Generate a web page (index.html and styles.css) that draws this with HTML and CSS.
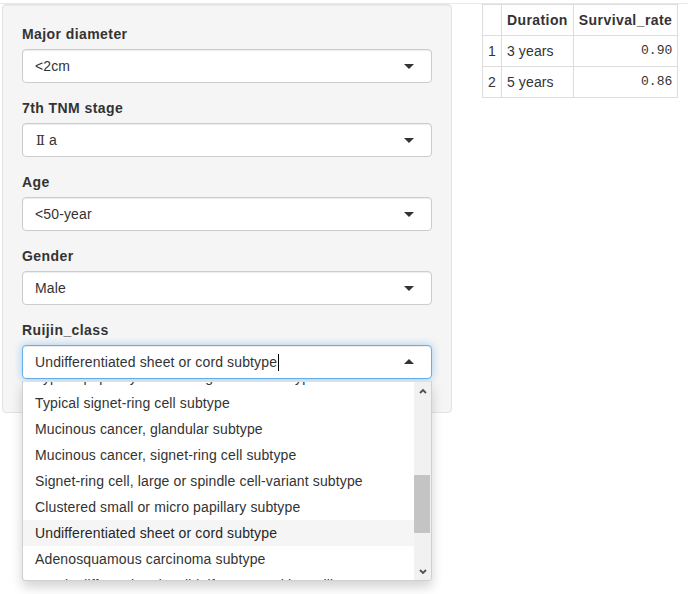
FILE: index.html
```html
<!DOCTYPE html>
<html>
<head>
<meta charset="utf-8">
<link rel="stylesheet" href="styles.css">
</head>
<body>
<div class="topline"></div>
<div class="layout">
  <div class="well">
    <div class="form-group">
      <label>Major diameter</label>
      <div class="select">
        <div class="select-input"><span class="item">&lt;2cm</span><span class="caret"></span></div>
      </div>
    </div>
    <div class="form-group">
      <label>7th TNM stage</label>
      <div class="select">
        <div class="select-input"><span class="item"><span class="roman">Ⅱ</span>a</span><span class="caret"></span></div>
      </div>
    </div>
    <div class="form-group">
      <label>Age</label>
      <div class="select">
        <div class="select-input"><span class="item">&lt;50-year</span><span class="caret"></span></div>
      </div>
    </div>
    <div class="form-group">
      <label>Gender</label>
      <div class="select">
        <div class="select-input"><span class="item">Male</span><span class="caret"></span></div>
      </div>
    </div>
    <div class="form-group last">
      <label>Ruijin_class</label>
      <div class="select open">
        <div class="select-input focus"><span class="item">Undifferentiated sheet or cord subtype</span><span class="cursor"></span><span class="caret"></span></div>
        <div class="dropdown">
          <div class="options">
            <div class="option partial-top">Typical papillary or tubular glandular subtype</div>
            <div class="option">Typical signet-ring cell subtype</div>
            <div class="option">Mucinous cancer, glandular subtype</div>
            <div class="option">Mucinous cancer, signet-ring cell subtype</div>
            <div class="option">Signet-ring cell, large or spindle cell-variant subtype</div>
            <div class="option">Clustered small or micro papillary subtype</div>
            <div class="option active">Undifferentiated sheet or cord subtype</div>
            <div class="option">Adenosquamous carcinoma subtype</div>
            <div class="option">Poorly differentiated, solid, if present with papillary</div>
          </div>
          <div class="scrollbar">
            <div class="arrow"><svg width="8" height="6" viewBox="0 0 8 6"><polyline points="1,5 4,2 7,5" fill="none" stroke="#505050" stroke-width="1.8"/></svg></div>
            <div class="track"><div class="thumb"></div></div>
            <div class="arrow"><svg width="8" height="6" viewBox="0 0 8 6"><polyline points="1,1 4,4 7,1" fill="none" stroke="#505050" stroke-width="1.8"/></svg></div>
          </div>
        </div>
      </div>
    </div>
  </div>
  <table class="results">
    <thead>
      <tr><th class="idx"></th><th>Duration</th><th>Survival_rate</th></tr>
    </thead>
    <tbody>
      <tr><td class="idx">1</td><td>3 years</td><td class="num">0.90</td></tr>
      <tr><td class="idx">2</td><td>5 years</td><td class="num">0.86</td></tr>
    </tbody>
  </table>
</div>
</body>
</html>
```
FILE: styles.css
```css
html {
  background: #fff;
}
body {
  margin: 0;
  min-height: 100vh;
  font-family: "Liberation Sans", Arial, "Noto Sans CJK SC", sans-serif;
  font-size: 14px;
  line-height: 20px;
  letter-spacing: 0.13px;
  color: #333;
  background: #fff;
}
.topline {
  height: 3px;
  border-bottom: 1px solid #e8e8e8;
}
.layout {
  display: flex;
  align-items: flex-start;
  padding-left: 2px;
  gap: 30px;
}
.well {
  width: 450px;
  box-sizing: border-box;
  background: #f5f5f5;
  border: 1px solid #e3e3e3;
  border-radius: 4px;
  padding: 19px;
  box-shadow: inset 0 1px 1px rgba(0,0,0,.05);
}
.form-group {
  margin-bottom: 15px;
}
.form-group.last {
  margin-bottom: 14px;
}
label {
  display: block;
  font-weight: bold;
  letter-spacing: 0.42px;
  margin-bottom: 5px;
}
.select {
  position: relative;
}
.select-input {
  display: flex;
  align-items: center;
  height: 34px;
  box-sizing: border-box;
  padding: 6px 12px;
  border: 1px solid #ccc;
  border-radius: 4px;
  background: #fff;
  box-shadow: inset 0 1px 1px rgba(0,0,0,.075);
}
.item {
  flex: none;
  white-space: nowrap;
}
.roman {
  display: inline-block;
  width: 14px;
  padding-left: 1px;
  box-sizing: border-box;
  font-family: "DejaVu Serif", "Liberation Serif", serif;
  font-size: 13px;
  letter-spacing: 0;
}
.caret {
  margin-left: auto;
  margin-right: 5px;
  width: 0;
  height: 0;
  border-style: solid;
  border-width: 5px 5px 0 5px;
  border-color: #333 transparent transparent transparent;
}
.open .caret {
  border-width: 0 5px 5px 5px;
  border-color: transparent transparent #333 transparent;
  margin-top: -1px;
}
.focus {
  border-color: #66afe9;
  box-shadow: inset 0 1px 1px rgba(0,0,0,.075), 0 0 8px rgba(102,175,233,.6);
}
.cursor {
  width: 1px;
  height: 17px;
  background: #000;
  margin-left: 1px;
}
.dropdown {
  position: absolute;
  top: 100%;
  left: 0;
  right: 0;
  margin-top: 2px;
  height: 200px;
  box-sizing: border-box;
  border: 1px solid #d0d0d0;
  border-top-color: #e0e0e0;
  border-radius: 0 0 4px 4px;
  background: #fff;
  box-shadow: 0 6px 12px rgba(0,0,0,.175);
  display: flex;
  overflow: hidden;
  z-index: 10;
}
.options {
  flex: 1;
  overflow: hidden;
}
.option {
  padding: 3px 12px;
  white-space: nowrap;
  color: #333;
}
.option.partial-top {
  margin-top: -18px;
}
.option.active {
  background: #f5f5f5;
  color: #262626;
}
.scrollbar {
  width: 17px;
  flex: none;
  background: #f1f1f1;
  display: flex;
  flex-direction: column;
}
.arrow {
  height: 17px;
  flex: none;
  display: flex;
  align-items: center;
  justify-content: center;
}
.track {
  flex: 1;
}
.thumb {
  margin-top: 76px;
  height: 58px;
  margin-right: 1px;
  background: #c4c4c4;
}
.results {
  border-collapse: collapse;
  border: 1px solid #ddd;
}
.results th,
.results td {
  border: 1px solid #ddd;
  padding: 5px;
  line-height: 20px;
}
.results th {
  text-align: left;
  font-weight: bold;
  letter-spacing: 0.42px;
}
.results .idx {
  text-align: right;
}
.results .num {
  text-align: right;
  font-family: "Liberation Mono", "Courier New", monospace;
  font-size: 13px;
  letter-spacing: 0;
}
```
